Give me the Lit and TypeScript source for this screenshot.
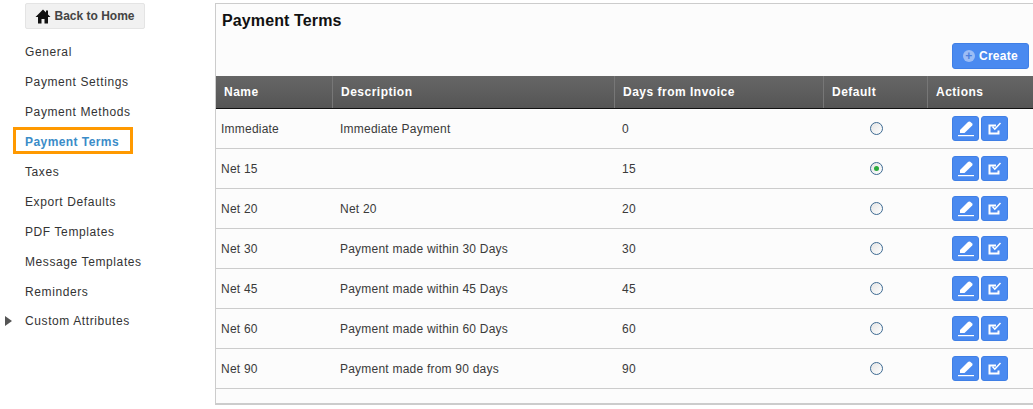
import { LitElement, html, css, svg } from "lit";
import { customElement } from "lit/decorators.js";

const NAV = ["General", "Payment Settings", "Payment Methods", "Payment Terms", "Taxes", "Export Defaults", "PDF Templates", "Message Templates"];
const ROWS: [string, string, string, boolean][] = [
  ["Immediate", "Immediate Payment", "0", false],
  ["Net 15", "", "15", true],
  ["Net 20", "Net 20", "20", false],
  ["Net 30", "Payment made within 30 Days", "30", false],
  ["Net 45", "Payment made within 45 Days", "45", false],
  ["Net 60", "Payment made within 60 Days", "60", false],
  ["Net 90", "Payment made from 90 days", "90", false],
];

const pencil = svg`<svg width="20" height="17" viewBox="0 0 20 17"><path fill="#fff" d="M4 10 12 2 Q13 1 14.2 1.8L16.2 3.6Q17 4.6 16.2 5.5L8.5 13H4Z"/><rect x="2" y="15" width="16" height="1.2" fill="#fff"/></svg>`;
const check = svg`<svg width="16" height="16" viewBox="0 0 16 16"><path fill="none" stroke="#fff" stroke-width="2" d="M11.5 9.5V12.5H2.5V4.5H9"/><path fill="none" stroke="#fff" stroke-width="1.5" d="M5.5 5.5 7.8 8.2 13.5 2"/></svg>`;

@customElement("app-root")
export class AppRoot extends LitElement {
  static styles = css`
    :host { display: flex; width: 1033px; height: 409px; overflow: hidden; background: #fff; font-family: "Liberation Sans", Arial, sans-serif; color: #333; font-size: 12px; }
    .side { width: 215px; flex: none; display: flex; flex-direction: column; }
    .back { margin: 3px 0 0 25px; width: 120px; height: 26px; box-sizing: border-box; background: #f1f1f1; border: 1px solid #e4e4e4; border-radius: 2px; display: flex; align-items: center; justify-content: center; gap: 3px; font-weight: bold; font-size: 12px; color: #444; }
    .nav { margin-top: 7px; display: flex; flex-direction: column; }
    .item { height: 30px; display: flex; align-items: center; padding-left: 25px; letter-spacing: 0.6px; position: relative; top: 1px; }
    .item.active { font-weight: bold; color: #3a8cc8; letter-spacing: 0.43px; }
    .item.active::after { content: ""; position: absolute; left: 13px; top: 0; width: 120px; height: 27px; box-sizing: border-box; border: 3px solid #f90; }
    .item.shift { top: 0; }
    .tri { position: absolute; left: 5px; top: 10px; width: 0; height: 0; border-left: 7px solid #555; border-top: 5px solid transparent; border-bottom: 5px solid transparent; }
    .panel { width: 818px; height: 402px; margin-top: 3px; flex: none; box-sizing: border-box; background: #fcfcfc; border-left: 1px solid #ccc; border-top: 1px solid #ccc; border-bottom: 2px solid #ccc; display: flex; flex-direction: column; }
    h1 { margin: 0; font-size: 16px; line-height: 20px; padding: 7px 0 0 6px; font-weight: bold; color: #111; height: 20px; letter-spacing: 0.12px; }
    .bar { display: flex; justify-content: flex-end; padding-right: 4px; margin-top: 12px; height: 33px; box-sizing: border-box; }
    .btn { background: #4a8af0; border: 1px solid #3f7fe6; border-radius: 3px; box-sizing: border-box; display: flex; align-items: center; justify-content: center; color: #fff; }
    .create { width: 77px; height: 26px; gap: 4px; font-weight: bold; font-size: 12px; letter-spacing: 0.3px; }
    .plus { width: 12px; height: 12px; border-radius: 50%; background: #9cbdf5; color: #4a7fe0; display: flex; align-items: center; justify-content: center; font-size: 12px; line-height: 12px; }
    .row { display: grid; grid-template-columns: 117px 282px 209px 104px 105px; }
    .head { height: 33px; box-sizing: border-box; background: linear-gradient(#666, #555); border-bottom: 1px solid #111; color: #fff; font-weight: bold; letter-spacing: 0.5px; }
    .head > div { display: flex; align-items: center; padding-left: 8px; border-right: 1px solid #777; }
    .head > div:last-child { border-right: 0; }
    .body { height: 40px; box-sizing: border-box; border-bottom: 1px solid #ccc; letter-spacing: 0.22px; color: #3a3a3a; }
    .body > div { display: flex; align-items: center; padding-left: 7px; }
    .body > div:first-child { padding-left: 5px; }
    .radio-cell { justify-content: center; padding: 0 !important; }
    .radio { width: 13px; height: 13px; box-sizing: border-box; border-radius: 50%; border: 1.5px solid #3d6a92; background: linear-gradient(135deg, #e4e4e4, #fff); display: flex; align-items: center; justify-content: center; }
    .dot { width: 5px; height: 5px; border-radius: 50%; background: #2aaa3c; }
    .actions { gap: 2px; padding-left: 24px !important; }
    .act { width: 27px; height: 25px; }
  `;

  render() {
    return html`
      <div class="side">
        <div class="back">
          <svg width="16" height="15" viewBox="0 0 16 15"><path fill="#111" d="M8 0.5 0.5 8H3V14.5H6.5V10H9.5V14.5H13V8H15.5L13 5.5V1.5H11V3.5Z"/></svg>
          <span>Back to Home</span>
        </div>
        <div class="nav">
          ${NAV.map((n) => html`<div class="item ${n === "Payment Terms" ? "active" : ""}">${n}</div>`)}
          <div class="item">Reminders</div>
          <div class="item shift"><span class="tri"></span>Custom Attributes</div>
        </div>
      </div>
      <div class="panel">
        <h1>Payment Terms</h1>
        <div class="bar"><div class="btn create"><span class="plus">+</span>Create</div></div>
        <div class="row head"><div>Name</div><div>Description</div><div>Days from Invoice</div><div>Default</div><div>Actions</div></div>
        ${ROWS.map(([a, b, c, d]) => html`
          <div class="row body">
            <div>${a}</div><div>${b}</div><div>${c}</div>
            <div class="radio-cell"><span class="radio">${d ? html`<span class="dot"></span>` : ""}</span></div>
            <div class="actions"><div class="btn act">${pencil}</div><div class="btn act">${check}</div></div>
          </div>`)}
      </div>
    `;
  }
}
